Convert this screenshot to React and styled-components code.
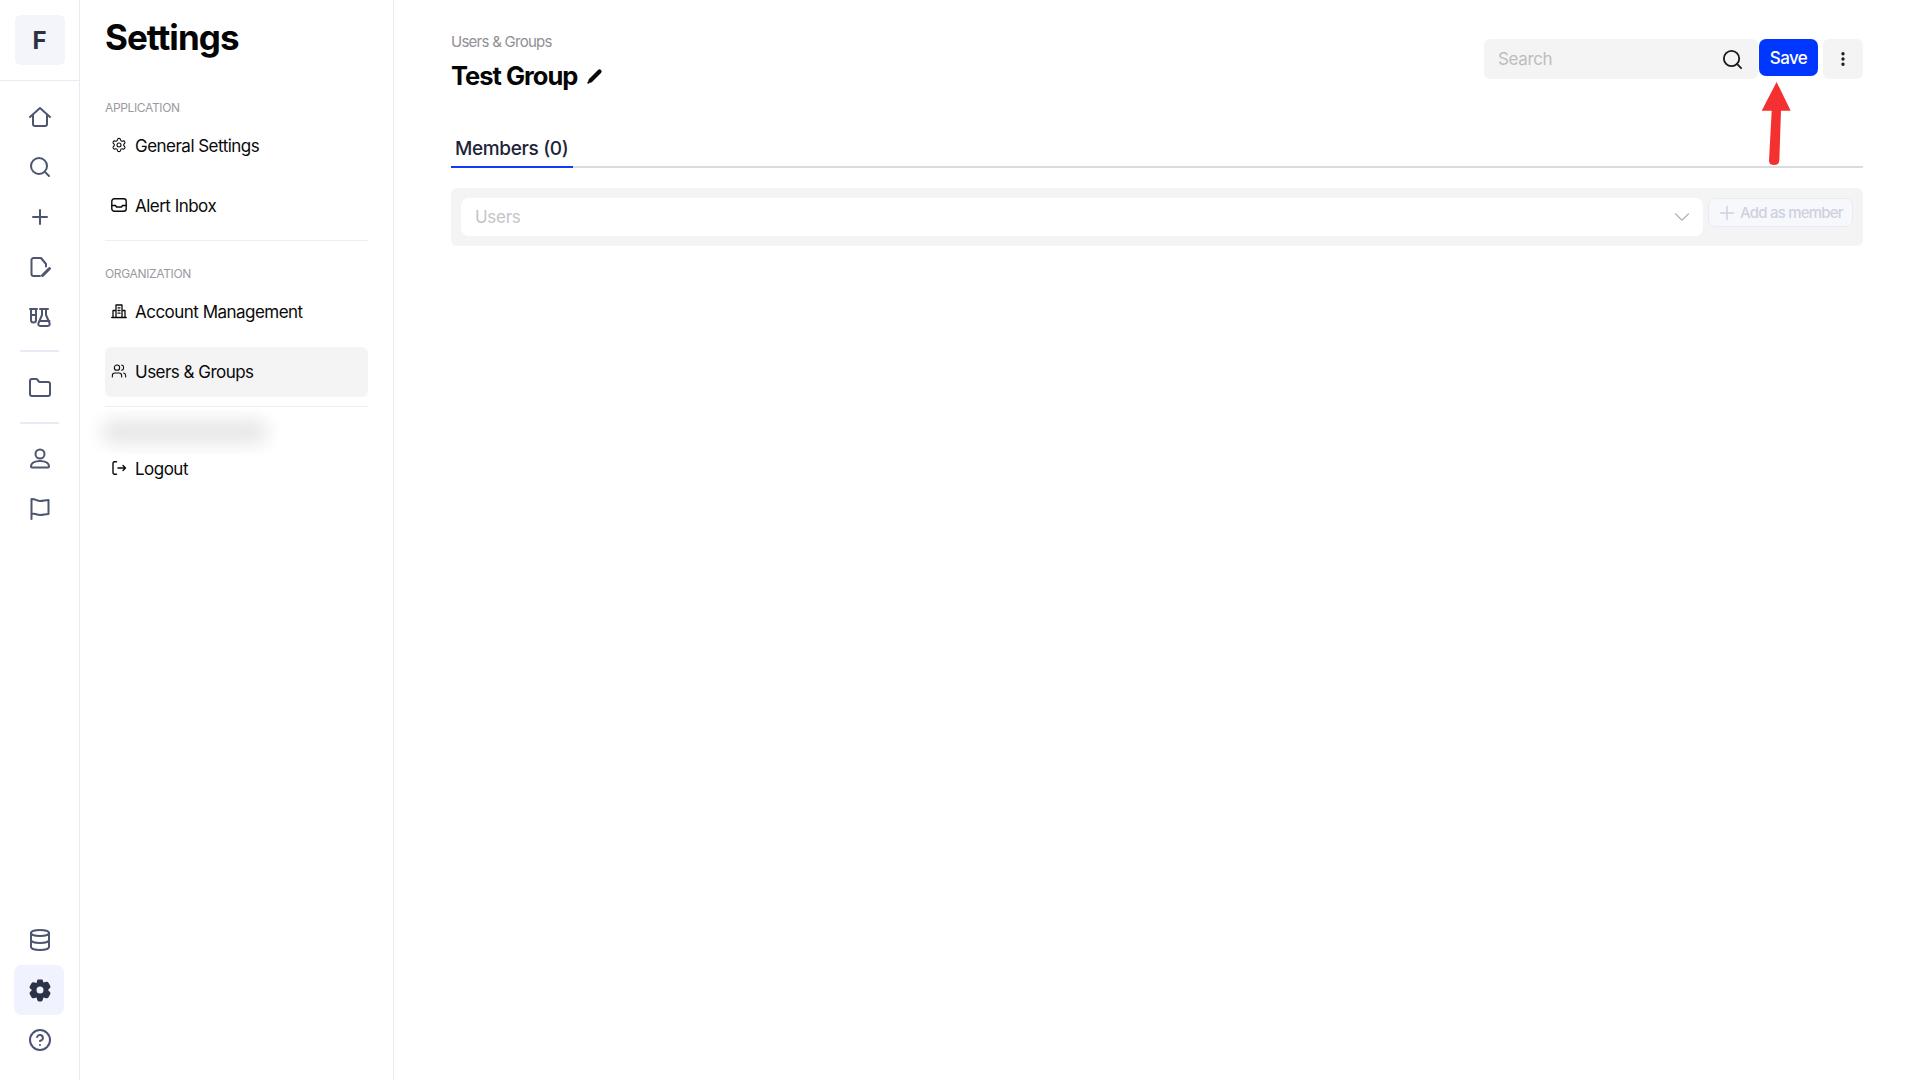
import React from 'react';
import styled, { createGlobalStyle } from 'styled-components';
import { Search, Plus, Folder, Database, CircleHelp, Settings as Cog, Users, ChevronDown, EllipsisVertical } from 'lucide-react';

const Global = createGlobalStyle`
  html, body { margin: 0; padding: 0; background: #fff; }
  body { font-family: Inter, "Liberation Sans", sans-serif; color: #0a0a0a; }
  * { box-sizing: border-box; }
`;
const Page = styled.div`display: flex; width: 1920px; height: 1080px; overflow: hidden; background: #fff;`;
const Rail = styled.nav`width: 80px; flex: none; border-right: 1px solid #e8eaf5; padding-right: 1px; display: flex; flex-direction: column; align-items: center;`;
const RailHead = styled.div`width: 79px; height: 81px; border-bottom: 1px solid #e8eaf5; padding: 15px 14px 0 15px;`;
const Logo = styled.div`width: 50px; height: 50px; border-radius: 6px; background: #f4f5fa; color: #2c3040; font-size: 24px; font-weight: 700; display: flex; align-items: center; justify-content: center;`;
const RailGroup = styled.div`display: flex; flex-direction: column; align-items: center; padding-top: ${p => p.$top || 0}px;`;
const RailButton = styled.div`width: 50px; height: 50px; padding-left: 1px; border-radius: 8px; display: flex; align-items: center; justify-content: center; color: #4d5670; background: ${p => p.$active ? '#f0f2fe' : 'transparent'};`;
const RailRule = styled.div`width: 39px; height: 2px; background: #e8eaf5; margin: ${p => p.$m || '8px 0'};`;
const RailSpacer = styled.div`flex: 1;`;
const RailFoot = styled.div`height: 15px; flex: none;`;
const Side = styled.aside`width: 314px; flex: none; border-right: 1px solid #e8eaf5; padding: 15px 25px 0 25px;`;
const SideTitle = styled.h1`margin: 0; font-size: 35px; line-height: 44px; font-weight: 700; color: #050505; letter-spacing: -0.95px;`;
const Section = styled.div`font-size: 12px; line-height: 16px; color: #9a9a9f; letter-spacing: -0.35px; margin-top: ${p => p.$mt}px;`;
const Item = styled.div`height: 50px; border-radius: 6px; display: flex; align-items: center; gap: 8px; padding: 0 6px; font-size: 17px; letter-spacing: -0.52px; color: #0a0a0a; margin-top: ${p => p.$mt || 0}px; background: ${p => p.$active ? '#f4f4f5' : 'transparent'}; svg { flex: none; position: relative; top: -1px; }`;
const SideRule = styled.div`height: 1px; background: #eeeff5; margin-top: ${p => p.$mt}px;`;
const Blur = styled.div`height: 44px; width: 205px; margin: 3px 0 -10px -25px; position: relative; z-index: 1; overflow: hidden; background: #fff; &::after { content: ''; position: absolute; left: 22px; top: 10px; width: 165px; height: 24px; border-radius: 10px; background: #e6e6e6; filter: blur(9px); }`;
const Main = styled.main`flex: 1; min-width: 0; padding: 0 57px 0 57px; display: flex; flex-direction: column;`;
const Header = styled.div`display: flex; justify-content: space-between; align-items: flex-start; height: 133px;`;
const TitleBlock = styled.div`padding-top: 33px;`;
const Crumb = styled.div`font-size: 15px; line-height: 18px; color: #8f8f94; letter-spacing: -0.74px;`;
const TitleRow = styled.div`display: flex; align-items: center; gap: 10px; margin-top: 8px;`;
const Title = styled.h2`margin: 0; font-size: 25.5px; line-height: 34px; font-weight: 700; letter-spacing: -1px; color: #050505;`;
const Actions = styled.div`display: flex; align-items: flex-start; padding-top: 39px; gap: 0;`;
const SearchBox = styled.div`width: 274px; height: 40px; background: #f4f4f5; border-radius: 6px; padding: 0 14px 0 14px; display: flex; align-items: center; justify-content: space-between; font-size: 17px; color: #bdbdc0; letter-spacing: -0.35px;`;
const Save = styled.div`width: 59px; height: 37px; background: #0037ff; color: #fff; border-radius: 7px; font-size: 17px; font-weight: 500; letter-spacing: -0.6px; display: flex; align-items: center; justify-content: center; margin-left: 1px;`;
const More = styled.div`width: 40px; height: 40px; background: #f4f4f5; border-radius: 6px; margin-left: 5px; display: flex; align-items: center; justify-content: center; color: #1a1a1a;`;
const TabBar = styled.div`height: 35px; border-bottom: 2px solid #dcdce0; display: flex;`;
const Tab = styled.div`width: 122px; height: 35px; border-bottom: 2px solid #0f3cf5; padding-left: 4px; font-size: 19px; line-height: 32px; font-weight: 500; color: #1d2438; letter-spacing: -0.35px;`;
const Panel = styled.div`margin-top: 20px; height: 58px; background: #f4f4f5; border-radius: 6px; padding: 10px 10px 0 10px; display: flex; gap: 5px; align-items: flex-start;`;
const Select = styled.div`flex: 1; height: 38px; background: #fff; border-radius: 8px; padding: 0 8px 0 14px; display: flex; align-items: center; justify-content: space-between; font-size: 17px; color: #c4c4c8; letter-spacing: -0.3px;`;
const AddBtn = styled.div`width: 145px; height: 29px; background: #f7f8fc; border: 1px solid #e8eaf5; border-radius: 7px; display: flex; align-items: center; gap: 2px; padding-left: 7px; font-size: 15px; font-weight: 500; color: #cdd1e0; letter-spacing: -0.78px;`;
const Arrow = styled.svg`position: absolute; left: 1760px; top: 80px;`;

const Ic = ({ children, size = 24, sw = 2, fill = 'none', box = 24 }) => (
  <svg width={size} height={size} viewBox={`0 0 ${box} ${box}`} fill={fill} stroke="currentColor" strokeWidth={sw} strokeLinecap="round" strokeLinejoin="round">{children}</svg>
);
const HomeIcon = () => <Ic><path d="M2 12 12 3l10 9" /><path d="M5 10.5V19a2 2 0 0 0 2 2h10a2 2 0 0 0 2-2v-8.5" /></Ic>;
const FileIcon = () => <Ic><path d="M12 21H5.5a2 2 0 0 1-2-2V5a2 2 0 0 1 2-2H13l5 6v2.5" /><path d="M14.5 20.5 21.5 13.5" strokeWidth="3" /></Ic>;
const FlaskPair = () => <Ic><path d="M2 4h7M3 4v11a2.5 2.5 0 0 0 5 0V4M3 10h5" /><path d="M12 4h8M14 4v6l-3.5 8a2 2 0 0 0 1.8 3h7.4a2 2 0 0 0 1.8-3L18 10V4M12.5 16h9" /></Ic>;
const UserIcon = () => <Ic><circle cx="12" cy="7" r="4.5" /><path d="M3 19.5c0-3.5 4-5.500 9-5.500s9 2 9 5.500c0 .8-.5 1-1 1H4c-.5 0-1-.2-1-1Z" /></Ic>;
const FlagIcon = () => <Ic><path d="M3.5 22V2c5 0 5 2 8.500 2s5-1 8.500-1v14c-3.500 0-5 1-8.500 1s-4-1.500-8.500-1.500" /></Ic>;
const GearSolid = () => (
  <svg width="24" height="24" viewBox="0 0 24 24" fill="#2c3347">
    <path fillRule="evenodd" d="M9.500 1.500h5l1 3 2.800-.8a2 2 0 0 1 2.200 1l1.700 3a2 2 0 0 1-.3 2.300L20 12l1.900 2a2 2 0 0 1 .3 2.300l-1.700 3a2 2 0 0 1-2.200 1l-2.800-.8-1 3a2 2 0 0 1-1.800 1h-1.400a2 2 0 0 1-1.800-1l-1-3-2.800.8a2 2 0 0 1-2.200-1l-1.700-3a2 2 0 0 1 .3-2.300L4 12l-1.900-1.500a2 2 0 0 1-.3-2.300l1.700-3a2 2 0 0 1 2.200-1l2.800.8ZM12 8.500a3.500 3.500 0 1 0 0 7 3.500 3.500 0 0 0 0-7Z" />
  </svg>
);
const InboxIcon = () => <Ic size={16} box={16} sw={1.4}><rect x="0.8" y="1.800" width="14.400" height="12.400" rx="2.500" /><path d="M1 8.500h3.500l1 1.500h5l1-1.500H15" /></Ic>;
const BuildingIcon = () => <Ic size={16} box={16} sw={1.3}><path d="M.7 14.500h14.600M2 14.500V7.500h3M14 14.500V7.500h-3M5 14.500V2h6v12.500M7 4.800h2M7 7.500h2M7 10.200h2" /></Ic>;
const LogoutIcon = () => <Ic size={16} box={16} sw={1.4}><path d="M5.500 1.800H3.500a1.500 1.500 0 0 0-1.500 1.500v9.400a1.500 1.500 0 0 0 1.500 1.500h2" /><path d="M7 8h7.500M12 5.500 14.500 8 12 10.500" /></Ic>;
const PencilSolid = () => (
  <svg width="16" height="16" viewBox="0 0 16 16" fill="none" stroke="#0a0a0a" strokeLinecap="round">
    <path d="M3.500 12.500 12.500 3.500" strokeWidth="4.200" />
    <path d="M1.200 14.800 3 13" strokeWidth="1.800" />
  </svg>
);

const r = { size: 24, strokeWidth: 2 };

export default function App() {
  return (
    <Page>
      <Global />
      <Rail>
        <RailHead><Logo>F</Logo></RailHead>
        <RailGroup $top={11}>
          <RailButton><HomeIcon /></RailButton>
          <RailButton><Search {...r} /></RailButton>
          <RailButton><Plus {...r} /></RailButton>
          <RailButton><FileIcon /></RailButton>
          <RailButton><FlaskPair /></RailButton>
        </RailGroup>
        <RailRule $m="8px 0 11px" />
        <RailButton><Folder {...r} /></RailButton>
        <RailRule $m="9px 0 10px" />
        <RailButton><UserIcon /></RailButton>
        <RailButton><FlagIcon /></RailButton>
        <RailSpacer />
        <RailGroup>
          <RailButton><Database {...r} /></RailButton>
          <RailButton $active><GearSolid /></RailButton>
          <RailButton><CircleHelp {...r} /></RailButton>
        </RailGroup>
        <RailFoot />
      </Rail>
      <Side>
        <SideTitle>Settings</SideTitle>
        <Section $mt={41}>APPLICATION</Section>
        <Item $mt={5}><Cog size={16} strokeWidth={1.6} />General Settings</Item>
        <Item $mt={10}><InboxIcon />Alert Inbox</Item>
        <SideRule $mt={9} />
        <Section $mt={25}>ORGANIZATION</Section>
        <Item $mt={5}><BuildingIcon />Account Management</Item>
        <Item $mt={10} $active><Users size={16} strokeWidth={1.6} />Users &amp; Groups</Item>
        <SideRule $mt={9} />
        <Blur />
        <Item><LogoutIcon />Logout</Item>
      </Side>
      <Main>
        <Header>
          <TitleBlock>
            <Crumb>Users &amp; Groups</Crumb>
            <TitleRow>
              <Title>Test Group</Title>
              <PencilSolid />
            </TitleRow>
          </TitleBlock>
          <Actions>
            <SearchBox>Search<Search size={23} color="#1a1a1a" strokeWidth={1.9} /></SearchBox>
            <Save>Save</Save>
            <More><EllipsisVertical size={18} strokeWidth={2.4} /></More>
          </Actions>
        </Header>
        <TabBar><Tab>Members (0)</Tab></TabBar>
        <Panel>
          <Select>Users<ChevronDown size={26} strokeWidth={1} color="#b0b0b6" /></Select>
          <AddBtn><Plus size={22} strokeWidth={1.6} />Add as member</AddBtn>
        </Panel>
      </Main>
      <Arrow width="32" height="90" viewBox="0 0 32 90">
        <path d="M16.600 2 L30.700 30.700 L21 30.700 L19.300 80.500 Q19 85 14 85 Q9 85 9 80.500 L11.700 30.700 L1.700 30.700 Z" fill="#f43030" />
      </Arrow>
    </Page>
  );
}
